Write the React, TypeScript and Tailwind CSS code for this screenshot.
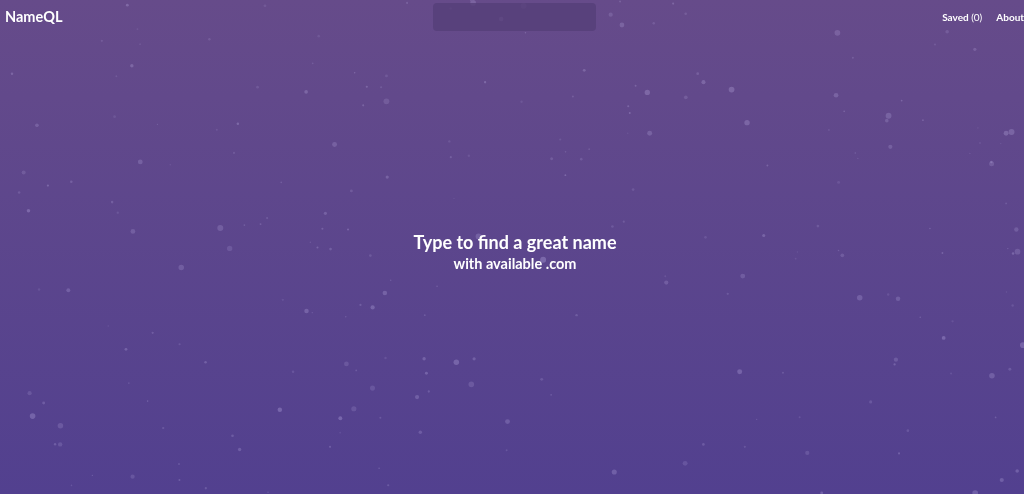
import React from 'react';

// deterministic scatter for the floating particles in the background
function makeParticles(count: number) {
  let seed = 1337;
  const rand = () => {
    seed = (seed * 16807) % 2147483647;
    return (seed - 1) / 2147483646;
  };
  const list: { x: number; y: number; r: number; o: number }[] = [];
  for (let i = 0; i < count; i++) {
    const big = rand() < 0.35;
    list.push({
      x: rand() * 1024,
      y: rand() * 494,
      r: big ? 1.5 + rand() * 1.5 : 0.6 + rand() * 0.9,
      o: big ? 0.16 + rand() * 0.14 : 0.12 + rand() * 0.16,
    });
  }
  return list;
}

const particles = makeParticles(230);

export default function App() {
  return (
    <div
      className="relative w-full h-[494px] overflow-hidden flex flex-col bg-gradient-to-b from-[#664b8a] to-[#52408f] text-white"
      style={{ fontFamily: 'Lato, "Open Sans", sans-serif' }}
    >
      {/* Particles */}
      <svg className="absolute inset-0 w-full h-full pointer-events-none" viewBox="0 0 1024 494" preserveAspectRatio="none">
        <defs>
          <filter id="soft" x="-50%" y="-50%" width="200%" height="200%">
            <feGaussianBlur stdDeviation="0.5" />
          </filter>
        </defs>
        <g filter="url(#soft)">
          {particles.map((p, i) => (
            <circle key={i} cx={p.x} cy={p.y} r={p.r} fill="#c9bdf0" opacity={p.o} />
          ))}
        </g>
      </svg>

      {/* Header */}
      <header className="relative grid grid-cols-[1fr_auto_1fr] items-center h-[34px] pl-[5px]">
        <div className="text-[14.5px] font-bold leading-none">NameQL</div>
        <div className="w-[163px] h-[28px] rounded-[4px] bg-[#553e78]/80" />
        <nav className="flex items-center justify-end gap-[14px] text-[10px] font-bold">
          <span>
            Saved <span className="font-normal">(0)</span>
          </span>
          <span>About</span>
        </nav>
      </header>

      {/* Empty state */}
      <main className="relative flex-1 flex flex-col items-center justify-center pb-[24px] pl-[6px]">
        <h1 className="text-[18px] font-bold leading-[23px]">Type to find a great name</h1>
        <p className="text-[14.5px] font-bold leading-[19px]">with available .com</p>
      </main>
    </div>
  );
}
